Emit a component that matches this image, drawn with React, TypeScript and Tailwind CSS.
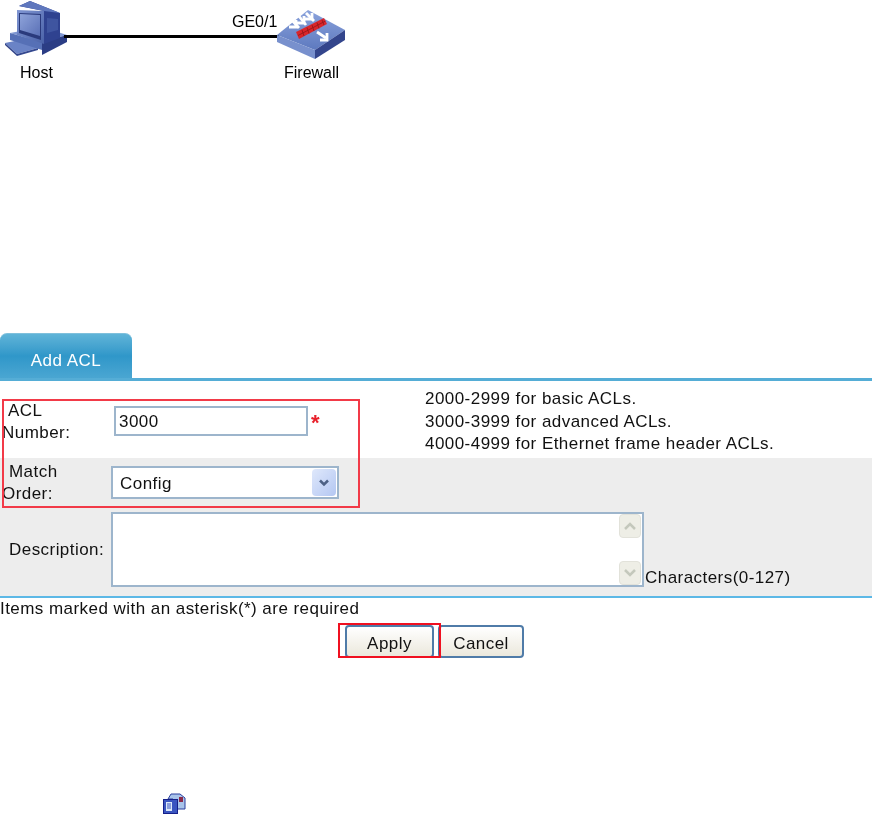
import React from 'react';

function HostIcon() {
    return (
        <svg width="66" height="58" viewBox="0 0 66 58" className="block">
            <defs>
                <linearGradient id="hostFront" x1="0" y1="0" x2="1" y2="1">
                    <stop offset="0" stopColor="#7f95d2" />
                    <stop offset="1" stopColor="#4a62a8" />
                </linearGradient>
                <linearGradient id="hostScreen" x1="0" y1="0" x2="1" y2="1">
                    <stop offset="0" stopColor="#8ea3da" />
                    <stop offset="1" stopColor="#5a70b6" />
                </linearGradient>
            </defs>
            {/* keyboard */}
            <polygon points="3,43 27,38 36,48 15,54" fill="#6a83c6" />
            <polygon points="3,43 15,54 15,56 3,45" fill="#2f4288" />
            <polygon points="15,54 36,48 36,50 15,56" fill="#34488f" />
            {/* desktop case */}
            <polygon points="8,33 40,27 65,35 40,42" fill="#7f97d2" />
            <polygon points="8,33 40,42 40,50 8,40" fill="#5670b6" />
            <polygon points="40,42 65,35 65,42 40,55" fill="#2b3d85" />
            {/* monitor */}
            <polygon points="17,6 28,1 58,13 58,38 42,44 42,11" fill="#2f4290" />
            <polygon points="17,6 28,1 58,13 42,11" fill="#5f77bd" />
            <polygon points="15,10 42,11 42,44 15,35" fill="url(#hostFront)" />
            <polygon points="17,13 39,14 39,40 17,33" fill="#2a3a7c" />
            <polygon points="18,14 38,15 38,36 18,30" fill="url(#hostScreen)" />
            <polygon points="45,18 56,19 56,30 45,33" fill="#3f55a0" />
        </svg>
    );
}

function FirewallIcon() {
    return (
        <svg width="70" height="50" viewBox="0 0 70 50" className="block">
            <defs>
                <linearGradient id="fwTop" x1="0" y1="0" x2="0" y2="1">
                    <stop offset="0" stopColor="#8ba3dc" />
                    <stop offset="1" stopColor="#5d79bf" />
                </linearGradient>
            </defs>
            <polygon points="0,25 31,0 68,20 38,40" fill="url(#fwTop)" />
            <polygon points="0,25 38,40 38,49 0,32" fill="#7890cd" />
            <polygon points="38,40 68,20 68,30 38,49" fill="#33458c" />
            {/* white arrows */}
            <g stroke="#ffffff" strokeWidth="2.800" fill="none">
                <path d="M13 8l9 10" />
                <path d="M9 15h7v-7" transform="translate(3 2)" />
                <path d="M21 5l8 10" />
                <path d="M18 11h7v-7" transform="translate(2 2)" />
                <path d="M29 3l8 8" />
                <path d="M26 8h7v-6" transform="translate(2 1)" />
                <path d="M40 22l9 6" />
                <path d="M43 30h7v-7" />
            </g>
            {/* red wall */}
            <polygon points="19,22 47,8 50,14 22,29" fill="#d9252a" />
            <g stroke="#8f1518" strokeWidth="0.800">
                <path d="M21 25.500L48.500 11" />
                <path d="M25 20l2 6M30 17.500l2 6M35 15l2 6M40 12.500l2 6M45 10l2 5" />
            </g>
        </svg>
    );
}

function SmallIcon() {
    return (
        <svg width="23" height="21" viewBox="0 0 23 21" className="block">
            <path d="M5 6 L8 1 H17 L22 5 V16 H10 V6 Z" fill="#a9c4ea" stroke="#2b3f9e" />
            <rect x="16" y="4" width="4" height="5" fill="#8c2a4a" />
            <rect x="0.500" y="6.500" width="14" height="14" fill="#3a55c0" stroke="#15208a" />
            <rect x="3" y="9" width="6" height="9" fill="#dbe8f8" />
            <path d="M4 11h4M4 13h4M4 15h4M10 10h3M10 13h3" stroke="#3a55c0" />
        </svg>
    );
}

function ScrollBtn({ up }: { up: boolean }) {
    return (
        <div className="w-[22px] h-[24px] bg-[#eeeee6] rounded-sm border border-[#e2e2da] flex items-center justify-center">
            <svg width="14" height="10" viewBox="0 0 14 10">
                <path d={up ? 'M2 8l5-5 5 5' : 'M2 2l5 5 5-5'} fill="none" stroke="#c4c8bc" strokeWidth="2.500" />
            </svg>
        </div>
    );
}

export default function App() {
    return (
        <div className="relative w-[872px] h-[815px] overflow-hidden bg-white text-[#111] text-[17px] tracking-[0.45px] blur-[0.35px] font-['Liberation_Sans',Arial,sans-serif]">
            {/* Network diagram */}
            <div className="relative h-[333px] text-[16px] tracking-normal text-black">
                <div className="absolute left-[2px] top-0"><HostIcon /></div>
                <div className="absolute left-[64px] top-[35px] w-[215px] h-[3px] bg-black" />
                <div className="absolute left-[277px] top-[10px]"><FirewallIcon /></div>
                <span className="absolute left-[232px] top-[10px]">GE0/1</span>
                <span className="absolute left-[20px] top-[61px]">Host</span>
                <span className="absolute left-[284px] top-[61px]">Firewall</span>
            </div>

            {/* Tab */}
            <div className="h-[45px] w-[132px] rounded-t-[7px] border-t border-[#7fc0dc] bg-gradient-to-b from-[#5fb4d8] via-[#2f97c9] to-[#4aa6d2] flex items-center justify-center pt-[10px] text-white tracking-[0.5px]">
                Add ACL
            </div>
            <div className="h-[3px] bg-[#55add6]" />

            {/* Form */}
            <div className="flex h-[77px]">
                <div className="w-[111px] shrink-0 pt-[19px] pl-[2px] leading-[22px] indent-[6px] pr-[30px]">ACL Number:</div>
                <div className="w-[314px] shrink-0 pl-[3px] pt-[25px] flex items-start">
                    <div className="w-[194px] h-[30px] border-2 border-[#9db5cc] bg-white pl-[3px] leading-[27px]">3000</div>
                    <span className="ml-[3px] mt-[6px] text-[#e8202a] text-[22px] font-bold leading-[22px]">*</span>
                </div>
                <div className="pt-[7px] leading-[22.500px]">
                    <div>2000-2999 for basic ACLs.</div>
                    <div>3000-3999 for advanced ACLs.</div>
                    <div>4000-4999 for Ethernet frame header ACLs.</div>
                </div>
            </div>
            <div className="flex h-[54px] bg-[#ededed]">
                <div className="w-[111px] shrink-0 pt-[3px] pl-[2px] leading-[22px] indent-[7px] pr-[30px]">Match Order:</div>
                <div className="pt-[8px]">
                    <div className="w-[228px] h-[33px] border-2 border-[#9db5cc] bg-white flex items-center justify-between pl-[7px] pr-[1px]">
                        <span className="pt-[3px]">Config</span>
                        <div className="w-[24px] h-[27px] rounded-sm bg-gradient-to-br from-[#dfe8fb] to-[#b4c7f2] flex items-center justify-center">
                            <svg width="12" height="10" viewBox="0 0 12 10">
                                <path d="M2 2.500l4 4 4-4" fill="none" stroke="#4d6185" strokeWidth="2.500" />
                            </svg>
                        </div>
                    </div>
                </div>
            </div>
            <div className="flex h-[84px] bg-[#ededed]">
                <div className="w-[111px] shrink-0 pl-[9px] pt-[27px] leading-[22px]">Description:</div>
                <div className="w-[533px] h-[75px] border-2 border-[#9db5cc] bg-white flex justify-end">
                    <div className="w-[23px] flex flex-col justify-between">
                        <ScrollBtn up />
                        <ScrollBtn up={false} />
                    </div>
                </div>
                <div className="self-start mt-[55px] pl-[1px] leading-[22px]">Characters(0-127)</div>
            </div>
            <div className="h-[2px] bg-[#5cb8e6]" />
            <div className="leading-[22px] h-[27px]">Items marked with an asterisk(*) are required</div>

            {/* Buttons */}
            <div className="flex pl-[345px] gap-[4px]">
                <div className="w-[89px] h-[33px] rounded-[4px] border-2 border-[#4f7ba8] bg-gradient-to-b from-white to-[#ebe8dc] flex items-center justify-center pt-[4px]">Apply</div>
                <div className="w-[86px] h-[33px] rounded-[4px] border-2 border-[#4f7ba8] bg-gradient-to-b from-white to-[#ebe8dc] flex items-center justify-center pt-[4px]">Cancel</div>
            </div>

            <div className="pl-[163px] pt-[135px]"><SmallIcon /></div>

            {/* Red highlight boxes */}
            <div className="absolute left-[2px] top-[399px] w-[358px] h-[109px] border-2 border-[#f23a48] pointer-events-none" />
            <div className="absolute left-[338px] top-[623px] w-[103px] h-[35px] border-2 border-[#f01020] pointer-events-none" />
        </div>
    );
}
